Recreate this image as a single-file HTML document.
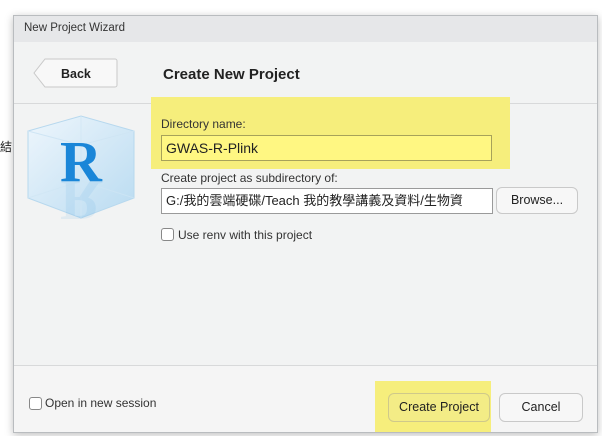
<!DOCTYPE html>
<html><head><style>
*{box-sizing:border-box;margin:0;padding:0}
body{width:602px;height:436px;background:#fff;position:relative;overflow:hidden;font-family:"Liberation Sans","Noto Sans CJK TC",sans-serif;color:#222}
.a{position:absolute}
.dlg{left:13px;top:15px;width:585px;height:418px;background:#f2f3f3;border:1px solid #b9bcbf;box-shadow:0 2px 8px rgba(0,0,0,.25)}
.inp{background:#fff;border:1px solid #9a9a9a;font-size:13px;padding-left:4px;line-height:24px;white-space:nowrap;overflow:hidden}
.btn{background:#f7f7f7;border:1px solid #c9c9c9;border-radius:6px;font-size:12.5px;text-align:center}
.cb{width:13px;height:13px;border:1px solid #888;border-radius:3px;background:#fff}
</style></head><body>
<div class="a" style="left:0;top:138px;font-size:12px">結</div>
<div class="a dlg"></div>
<div class="a" style="left:14px;top:16px;width:583px;height:26px;background:#e6e7e9"></div>
<div class="a" style="left:24px;top:22px;font-size:11.5px;color:#333">New Project Wizard</div>
<svg class="a" style="left:33px;top:58px" width="85" height="31"><path d="M12 1H82a2 2 0 0 1 2 2V27a2 2 0 0 1-2 2H12L1 15Z" fill="#f8f8f8" stroke="#c9c9c9"/></svg>
<div class="a" style="left:61px;top:67px;font-size:12.5px;font-weight:bold">Back</div>
<div class="a" style="left:163px;top:66px;font-size:15px;font-weight:bold">Create New Project</div>
<div class="a" style="left:14px;top:103px;width:583px;height:1px;background:#d8d9da"></div>
<svg class="a" style="left:26px;top:113px" width="112" height="108">
<defs><linearGradient id="g" x1="0" y1="0" x2="1" y2="1"><stop offset="0" stop-color="#eef6fc"/><stop offset="1" stop-color="#b9dbf1"/></linearGradient></defs>
<path d="M2 18 55 3 108 18 108 85 55 105 2 85Z" fill="url(#g)" stroke="#b7d8ee"/>
<path d="M2 18 55 32 108 18M55 32V105" fill="none" stroke="#cfe5f4" stroke-width="1"/>
<path d="M2 85 55 68 108 85M55 3V68" fill="none" stroke="#cfe5f4" stroke-width="1" opacity=".7"/>
<text x="55" y="68" text-anchor="middle" font-family="Liberation Serif,serif" font-weight="bold" font-size="58" fill="#1a86d8">R</text>
<text x="55" y="68" text-anchor="middle" font-family="Liberation Serif,serif" font-weight="bold" font-size="58" fill="#1a86d8" opacity=".08" transform="translate(0,136) scale(1,-1)">R</text>
</svg>
<div class="a" style="left:151px;top:97px;width:359px;height:72px;background:#f6ee7c"></div>
<div class="a" style="left:161px;top:117px;font-size:12px;color:#333">Directory name:</div>
<div class="a inp" style="left:161px;top:135px;width:331px;height:26px;background:#fff782;border-color:#a7a25a;font-size:14px">GWAS-R-Plink</div>
<div class="a" style="left:161px;top:171px;font-size:12px;color:#333">Create project as subdirectory of:</div>
<div class="a inp" style="left:161px;top:188px;width:332px;height:26px">G:/我的雲端硬碟/Teach 我的教學講義及資料/生物資</div>
<div class="a btn" style="left:496px;top:187px;width:82px;height:27px;line-height:25px">Browse...</div>
<div class="a cb" style="left:161px;top:228px"></div>
<div class="a" style="left:178px;top:228px;font-size:12px;color:#333">Use renv with this project</div>
<div class="a" style="left:14px;top:365px;width:583px;height:1px;background:#d8d9da"></div>
<div class="a" style="left:14px;top:366px;width:583px;height:66px;background:#f5f5f5"></div>
<div class="a cb" style="left:29px;top:397px"></div>
<div class="a" style="left:45px;top:396px;font-size:12px;color:#333">Open in new session</div>
<div class="a" style="left:375px;top:381px;width:116px;height:51px;background:#f6ee7c"></div>
<div class="a btn" style="left:388px;top:393px;width:102px;height:29px;line-height:27px;background:#f3ec86;border-color:#cfc98a">Create Project</div>
<div class="a btn" style="left:499px;top:393px;width:84px;height:29px;line-height:27px">Cancel</div>
</body></html>
